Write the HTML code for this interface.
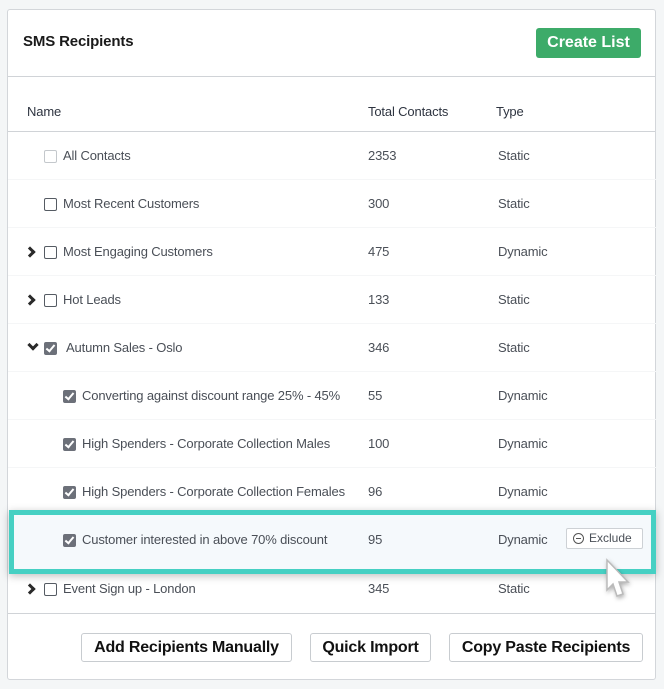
<!DOCTYPE html>
<html><head><style>
body{margin:0;width:664px;height:689px;background:#f4f6f7;font-family:"Liberation Sans",sans-serif;position:relative;overflow:hidden}
.card{position:absolute;left:7px;top:9px;width:649px;height:671px;background:#fff;border:1px solid #d3d6da;border-radius:3px;box-sizing:border-box}
.t{position:absolute;font-size:13px;color:#4a4f57;white-space:nowrap;line-height:16px;letter-spacing:-0.15px}
.hl{position:absolute;left:0;right:0;height:1px;background:#d0d3d7}
.rl{position:absolute;left:8px;right:8px;height:1px;background:#f5f6f7}
.cb{position:absolute;width:11px;height:11px;border:1px solid #555b63;border-radius:2px;background:#fff}
.cb.dis{border-color:#c4c8cc}
.cb.on{background:#6c7079;border-color:#6c7079}
.cb.on:after{content:"";position:absolute;left:3px;top:0px;width:3px;height:7px;border:solid #fff;border-width:0 2px 2px 0;transform:rotate(40deg)}
.chev{position:absolute;width:5px;height:5px;border:solid #2a2a2a;border-width:0 3px 3px 0}
.btn{position:absolute;top:633px;height:29px;border:1px solid #c8ccd0;border-radius:3px;background:#fff;font-weight:bold;font-size:16px;color:#111;text-align:center;line-height:28px;box-sizing:border-box;letter-spacing:-0.2px}
</style></head><body>
<div class="card"></div>
<div class="t" style="left:23px;top:34px;font-size:15px;font-weight:bold;color:#1a1a1a">SMS Recipients</div>
<div style="position:absolute;left:536px;top:28px;width:105px;height:30px;background:#3dab69;border-radius:3px;color:#fff;font-weight:bold;font-size:16px;text-align:center;line-height:29px">Create List</div>
<div class="hl" style="left:8px;right:9px;top:76px"></div>
<div class="t" style="left:27px;top:104px;color:#2e3440">Name</div>
<div class="t" style="left:368px;top:104px;color:#2e3440">Total Contacts</div>
<div class="t" style="left:496px;top:104px;color:#2e3440">Type</div>
<div class="hl" style="left:8px;right:9px;top:131px"></div>

<div class="cb dis" style="left:44px;top:150px"></div><div class="t" style="left:63px;top:148px">All Contacts</div><div class="t" style="left:368px;top:148px">2353</div><div class="t" style="left:498px;top:148px">Static</div>
<div class="rl" style="top:179px"></div>
<div class="cb" style="left:44px;top:198px"></div><div class="t" style="left:63px;top:196px">Most Recent Customers</div><div class="t" style="left:368px;top:196px">300</div><div class="t" style="left:498px;top:196px">Static</div>
<div class="rl" style="top:227px"></div>
<div class="chev" style="left:26px;top:248px;transform:rotate(-45deg)"></div><div class="cb" style="left:44px;top:246px"></div><div class="t" style="left:63px;top:244px">Most Engaging Customers</div><div class="t" style="left:368px;top:244px">475</div><div class="t" style="left:498px;top:244px">Dynamic</div>
<div class="rl" style="top:275px"></div>
<div class="chev" style="left:26px;top:296px;transform:rotate(-45deg)"></div><div class="cb" style="left:44px;top:294px"></div><div class="t" style="left:63px;top:292px">Hot Leads</div><div class="t" style="left:368px;top:292px">133</div><div class="t" style="left:498px;top:292px">Static</div>
<div class="rl" style="top:323px"></div>
<div class="chev" style="left:29px;top:341px;transform:rotate(45deg)"></div><div class="cb on" style="left:44px;top:342px"></div><div class="t" style="left:66px;top:340px">Autumn Sales - Oslo</div><div class="t" style="left:368px;top:340px">346</div><div class="t" style="left:498px;top:340px">Static</div>
<div class="rl" style="top:371px"></div>
<div class="cb on" style="left:63px;top:390px"></div><div class="t" style="left:82px;top:388px">Converting against discount range 25% - 45%</div><div class="t" style="left:368px;top:388px">55</div><div class="t" style="left:498px;top:388px">Dynamic</div>
<div class="rl" style="top:419px"></div>
<div class="cb on" style="left:63px;top:438px"></div><div class="t" style="left:82px;top:436px">High Spenders - Corporate Collection Males</div><div class="t" style="left:368px;top:436px">100</div><div class="t" style="left:498px;top:436px">Dynamic</div>
<div class="rl" style="top:467px"></div>
<div class="cb on" style="left:63px;top:486px"></div><div class="t" style="left:82px;top:484px">High Spenders - Corporate Collection Females</div><div class="t" style="left:368px;top:484px">96</div><div class="t" style="left:498px;top:484px">Dynamic</div>

<div style="position:absolute;left:9px;top:510px;width:647px;height:64px;border:5px solid #46d0c3;box-sizing:border-box;background:#f5f9fc;box-shadow:0 2px 8px rgba(0,0,0,.25)"></div>
<div class="cb on" style="left:63px;top:534px"></div><div class="t" style="left:82px;top:532px">Customer interested in above 70% discount</div><div class="t" style="left:368px;top:532px">95</div><div class="t" style="left:498px;top:532px">Dynamic</div>
<div style="position:absolute;left:566px;top:528px;width:77px;height:21px;border:1px solid #cdd1d5;border-radius:2px;background:#fff;box-sizing:border-box;font-size:12px;color:#4a4f57;line-height:19px;padding-left:22px">Exclude
<div style="position:absolute;left:6px;top:4px;width:9px;height:9px;border:1px solid #555;border-radius:50%"></div><div style="position:absolute;left:9px;top:9px;width:5px;height:1px;background:#555"></div></div>

<div class="chev" style="left:26px;top:585px;transform:rotate(-45deg)"></div><div class="cb" style="left:44px;top:583px"></div><div class="t" style="left:63px;top:581px">Event Sign up - London</div><div class="t" style="left:368px;top:581px">345</div><div class="t" style="left:498px;top:581px">Static</div>
<svg style="position:absolute;left:598px;top:556px" width="40" height="48" viewBox="0 0 40 48"><path d="M9 4 L30 26 L21 26 L25 38 L19 40 L15 28 L9 34 Z" fill="#fff" stroke="#bbb" stroke-width="1.5" style="filter:drop-shadow(1px 2px 2px rgba(0,0,0,.3))"/></svg>
<div class="hl" style="left:8px;right:9px;top:613px"></div>
<div class="btn" style="left:81px;width:211px">Add Recipients Manually</div>
<div class="btn" style="left:310px;width:121px">Quick Import</div>
<div class="btn" style="left:449px;width:194px">Copy Paste Recipients</div>
</body></html>
